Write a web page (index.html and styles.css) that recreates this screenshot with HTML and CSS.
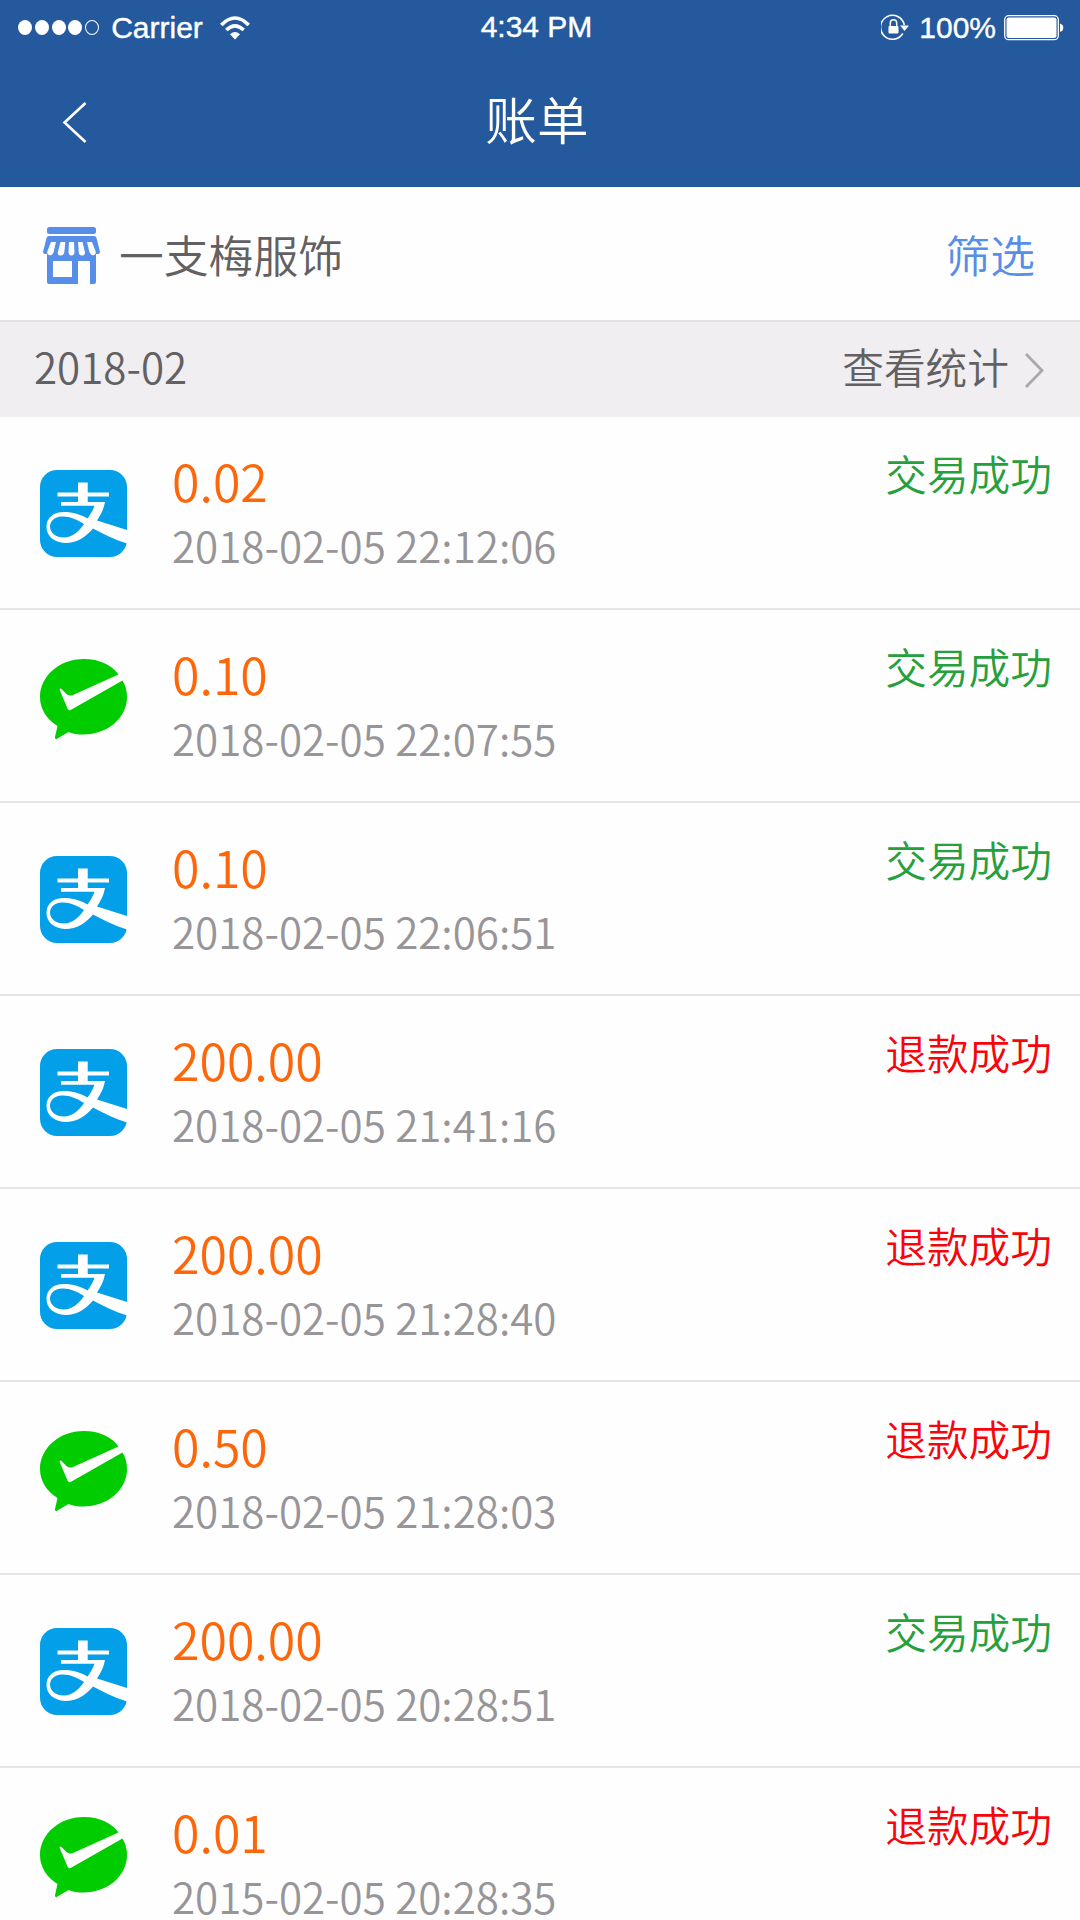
FILE: index.html
```html
<!DOCTYPE html>
<html lang="zh-CN">
<head>
<meta charset="utf-8">
<title>账单</title>
<link rel="stylesheet" href="styles.css">
</head>
<body>
<svg class="sprite" aria-hidden="true">
  <symbol id="alipay" viewBox="0 0 87 87">
    <rect width="87" height="87" rx="17" fill="#03a0e9"/>
    <path fill="#fff" d="M38 12.500H47.700V22.500H69V26.500H47.700V32H65C63.500 40 60.500 45 57 50.500L87 60V73.500C74 69.500 63 64 53 58.500C46 67 37 73 25 73C14 72.500 6.500 66 6.500 57C6.500 48 13 42 24 42C33 42 40.500 44.500 47.500 48.500C50.500 44.500 53 40 54.500 35.700H21V32H38V26.500H17.500V22.500H38ZM44 54C37 49.500 29 46 22 46.500C14 47 10 51.500 10 56.500C10 63 16 67.500 24 67.500C32 67.500 38.500 62 44 54Z"/>
  </symbol>
  <symbol id="wechat" viewBox="0 0 87 80">
    <path fill="#0c0" d="M43.500 0C60 0 71.500 6 78.500 15.500L33 36C30.500 37 28.500 36.500 26.500 35L21.500 30C20.500 28.800 19.200 29.500 19.800 31.200L27.500 49.500C28.300 51.500 30 51.800 31.500 50.500L82.500 21.500C85.500 26.500 87 31.800 87 38C87 59 67.500 75.500 43.500 75.500C38 75.500 33 75 28.500 73L17 79.800C15.500 80.500 14.800 79.500 15 78L17.500 67C6.500 60 0 50 0 38C0 17 19.500 0 43.500 0Z"/>
  </symbol>
</svg>
<header class="header">
  <div class="status">
    <div class="status-left">
      <span class="signal"><i></i><i></i><i></i><i></i><i class="empty"></i></span>
      <span class="carrier">Carrier</span>
      <svg class="wifi" width="30" height="24" viewBox="0 0 30 24"><g fill="none" stroke="#fff" stroke-width="3.600"><path d="M1.300 9Q15-5 28.700 9"/><path d="M6.300 14Q15 5.800 23.700 14"/></g><path fill="#fff" d="M10 18.200Q15 14 20 18.200L15 23.500Z"/></svg>
    </div>
    <span class="time">4:34 PM</span>
    <div class="status-right">
      <svg class="lock" width="28" height="27" viewBox="0 0 28 27"><path d="M21.800 19.500A12 12 0 1 1 23.300 11" fill="none" stroke="#fff" stroke-width="1.600"/><path d="M19 11.500H28L23.500 17Z" fill="#fff"/><rect x="7.500" y="12" width="10" height="7.500" rx="1" fill="#fff"/><path d="M9.300 12V9A3.200 3.200 0 0 1 15.700 9V12" fill="none" stroke="#fff" stroke-width="1.500"/></svg>
      <span class="percent">100%</span>
      <svg width="60" height="26" viewBox="0 0 60 26"><rect x=".7" y=".7" width="53.600" height="24" rx="4" fill="none" stroke="#fff" stroke-width="1.300"/><rect x="2.500" y="2.500" width="50" height="20.400" rx="2.500" fill="#fff"/><path d="M56 8.500Q59.300 9.500 59.300 12.700T56 17Z" fill="#fff"/></svg>
    </div>
  </div>
  <div class="nav">
    <svg class="back" width="26" height="42" viewBox="0 0 26 42"><path d="M23.500 1L2.500 20.500L23.500 40" fill="none" stroke="#fff" stroke-width="2.600"/></svg>
    <h1>账单</h1>
  </div>
</header>
<section class="shop">
  <svg class="shop-icon" width="57" height="58" viewBox="0 0 57 58" fill="#568ee9"><rect x="4" y="0" width="49" height="7" rx="2.500"/><path d="M6 9H51Q53 9 53.500 11L57 25Q57 27 55 27H53V55Q53 57 51 57H47V34H35V57H6Q4 57 4 55V27H2Q0 27 0 25L3.500 11Q4 9 6 9ZM10 34V50H29V34Z"/><path fill="#fff" d="M8 15H13L10.500 25.500Q9 29 6 28Q3.500 27 4.500 24ZM17.500 15H22.300L21.300 25.500Q20.500 28.500 17.500 28.500T14.800 25.500ZM26 15H31L31.500 25.500Q31 28.500 28.500 28.500T25.500 25.500ZM35 15H39.500L42 25.500Q42 28.500 39 28.500T35.800 25.500ZM44 15H49L52.500 24Q53.500 27 51 28T46.500 25.500Z"/></svg>
  <span class="shop-name">一支梅服饰</span>
  <span class="filter">筛选</span>
</section>
<section class="month">
  <span class="period">2018-02</span>
  <span class="stats">查看统计</span>
  <svg width="19" height="36" viewBox="0 0 19 36"><path d="M1 1L17 17.500L1 34" fill="none" stroke="#aaa8aa" stroke-width="2.800"/></svg>
</section>
<main class="list">
  <article class="row"><svg class="pay"><use href="#alipay"/></svg><div class="info"><div class="amount">0.02</div><div class="date">2018-02-05 22:12:06</div></div><span class="state ok">交易成功</span></article>
  <article class="row"><svg class="pay wechat"><use href="#wechat"/></svg><div class="info"><div class="amount">0.10</div><div class="date">2018-02-05 22:07:55</div></div><span class="state ok">交易成功</span></article>
  <article class="row"><svg class="pay"><use href="#alipay"/></svg><div class="info"><div class="amount">0.10</div><div class="date">2018-02-05 22:06:51</div></div><span class="state ok">交易成功</span></article>
  <article class="row"><svg class="pay"><use href="#alipay"/></svg><div class="info"><div class="amount">200.00</div><div class="date">2018-02-05 21:41:16</div></div><span class="state refund">退款成功</span></article>
  <article class="row"><svg class="pay"><use href="#alipay"/></svg><div class="info"><div class="amount">200.00</div><div class="date">2018-02-05 21:28:40</div></div><span class="state refund">退款成功</span></article>
  <article class="row"><svg class="pay wechat"><use href="#wechat"/></svg><div class="info"><div class="amount">0.50</div><div class="date">2018-02-05 21:28:03</div></div><span class="state refund">退款成功</span></article>
  <article class="row"><svg class="pay"><use href="#alipay"/></svg><div class="info"><div class="amount">200.00</div><div class="date">2018-02-05 20:28:51</div></div><span class="state ok">交易成功</span></article>
  <article class="row"><svg class="pay wechat"><use href="#wechat"/></svg><div class="info"><div class="amount">0.01</div><div class="date">2015-02-05 20:28:35</div></div><span class="state refund">退款成功</span></article>
</main>
</body>
</html>
```
FILE: styles.css
```css
* { box-sizing: border-box; }
body {
  margin: 0;
  width: 1080px;
  height: 1920px;
  overflow: hidden;
  background: #fefefe;
  font-family: "Noto Sans CJK SC DemiLight", "Noto Sans CJK SC", sans-serif;
  font-size: 41.7px;
  color: #626062;
}
svg { display: block; flex: none; }
.sprite { display: none; }
.header { height: 187px; background: #24599e; color: #fff; }
.status {
  height: 55px;
  display: grid;
  grid-template-columns: 1fr auto 1fr;
  padding: 0 16px 0 18px;
  font: 30px/55px "Liberation Sans", sans-serif;
  -webkit-text-stroke: .4px #fff;
}
.status-left, .status-right { display: flex; align-items: center; }
.status-right { justify-content: flex-end; }
.signal { display: flex; gap: 2.800px; }
.signal i { width: 14px; height: 15px; border-radius: 50%; background: #fff; }
.signal .empty { background: none; border: 1px solid #fff; }
.carrier { margin-left: 12px; }
.wifi { margin-left: 17px; }
.time { margin-right: 9px; line-height: 53px; }
.percent { margin: 0 8px 0 10px; }
.nav {
  height: 132px;
  display: grid;
  grid-template-columns: 1fr auto 1fr;
  align-items: center;
  padding: 0 63px 0 62px;
}
.back { margin-top: 4px; }
h1 { margin: 0 5px 0 0; font-size: 51.700px; font-weight: 400; line-height: 120px; height: 126px; }
.shop {
  height: 133px;
  display: flex;
  align-items: center;
  padding: 0 45px 0 43px;
  font-size: 44.800px;
}
.shop-icon { margin: 5px 19px 0 0; }
.shop-name { flex: 1; }
.filter { color: #568ee9; }
.month {
  height: 97px;
  display: flex;
  align-items: center;
  padding: 0 36px 0 34px;
  background: #f0eef1;
  border-top: 2px solid #e3e1e4;
}
.month span { line-height: 60px; height: 67px; }
.period { font-size: 42.100px; }
.stats { margin: 0 16px 0 auto; }
.month svg { margin-top: 2px; }
.row {
  height: 193px;
  display: flex;
  border-bottom: 2px solid #e6e4e7;
  padding: 0 28px 0 40px;
}
.pay { width: 87px; height: 87px; margin-top: 53px; }
.wechat { height: 80px; margin-top: 49px; }
.info { flex: 1; margin-left: 45px; padding-top: 31px; }
.amount { font-size: 50px; line-height: 64px; color: #fd6609; }
.date { font-size: 42.100px; line-height: 66px; color: #979598; }
.state { line-height: 60px; margin-top: 26px; }
.ok { color: #26a03c; }
.refund { color: #f8040a; }
```
